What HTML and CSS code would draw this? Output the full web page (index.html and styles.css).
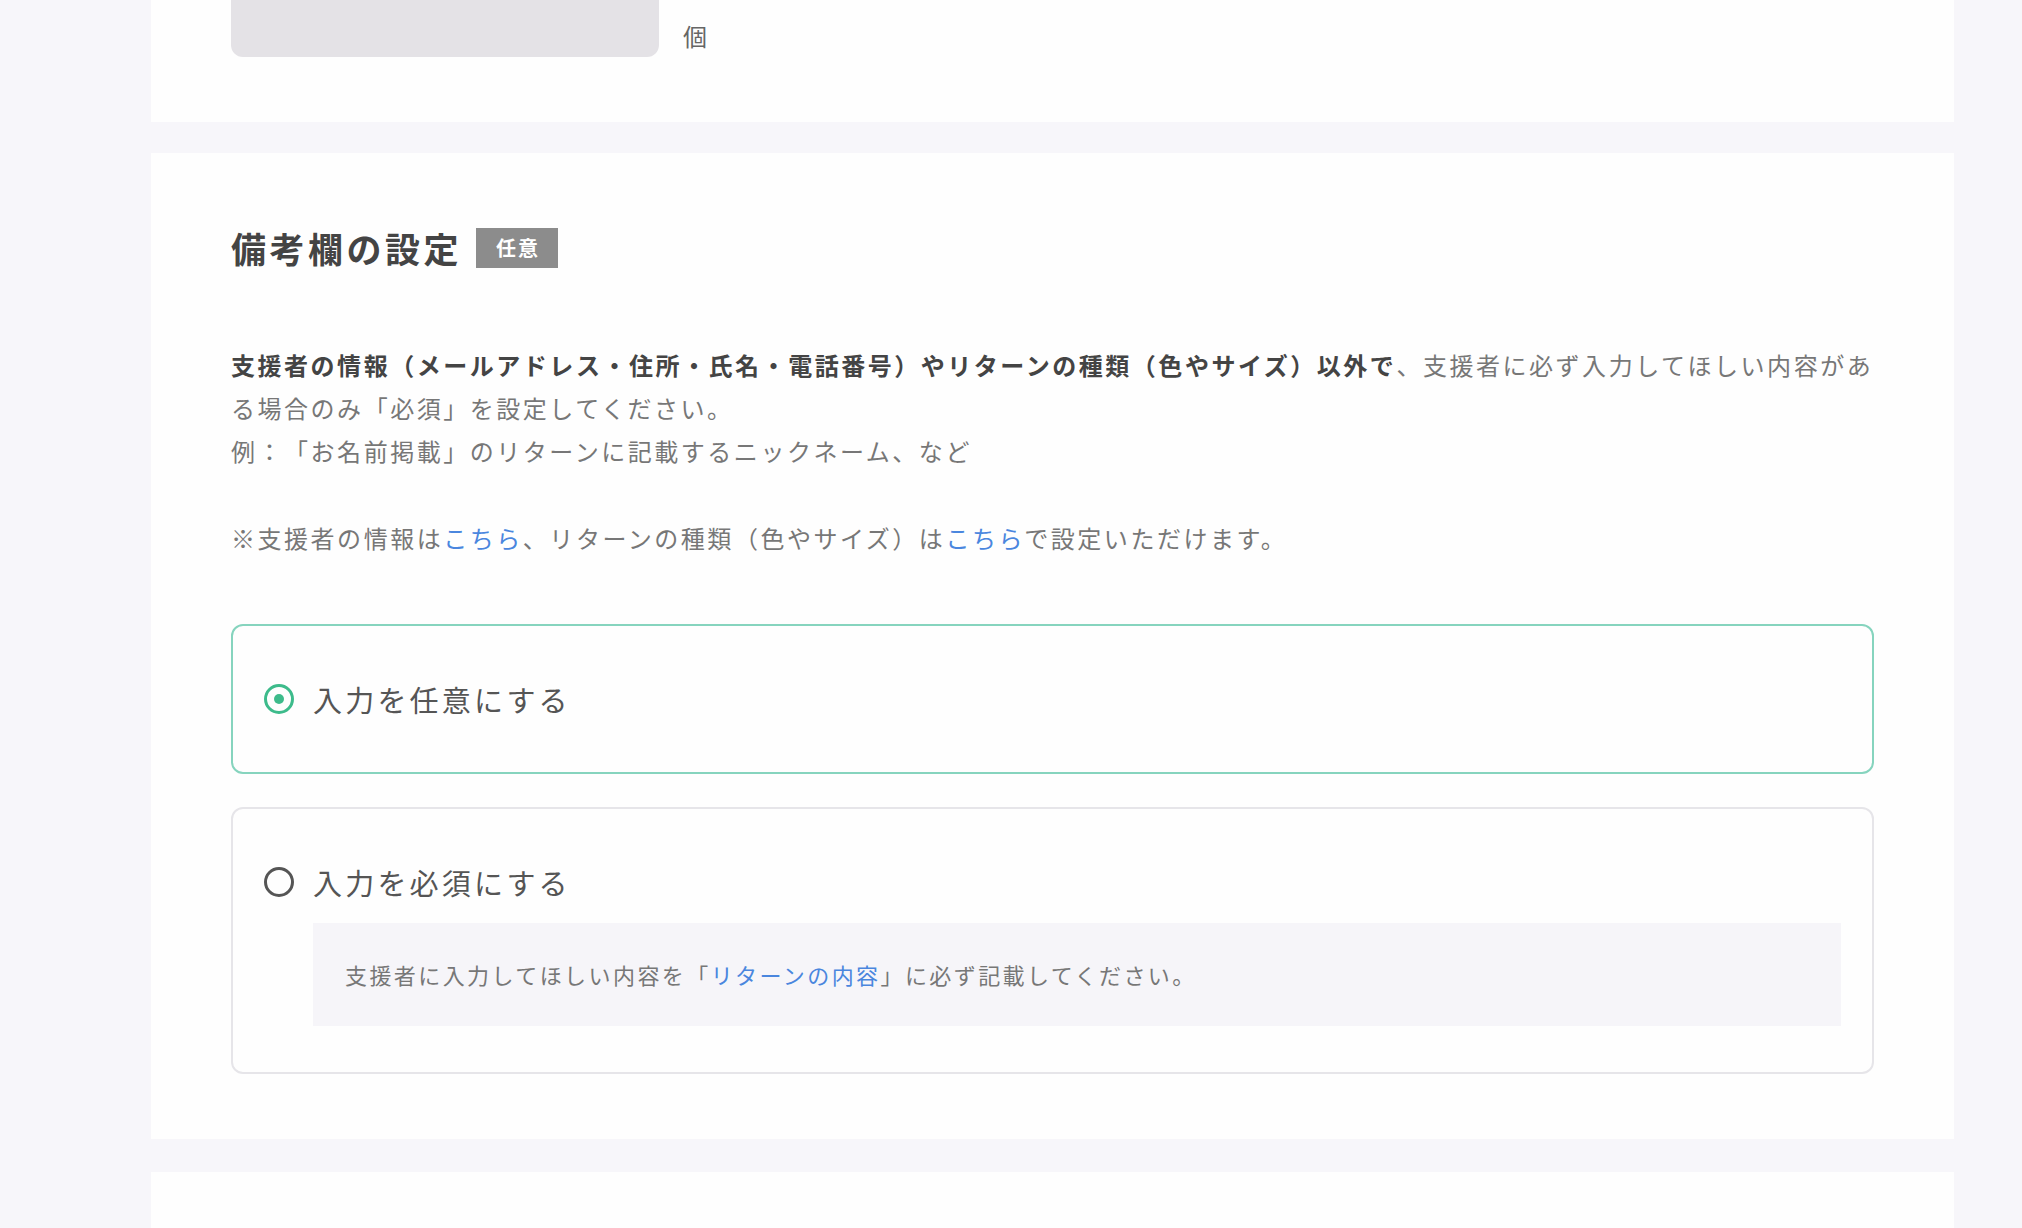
FILE: index.html
```html
<!DOCTYPE html>
<html lang="ja">
<head>
  <meta charset="UTF-8" />
  <meta name="viewport" content="width=device-width, initial-scale=1.0"/>
  <title>備考欄の設定</title>
  <link rel="stylesheet" href="styles.css">
</head>
<body>
  <div class="page">

    <!-- Quantity (cut off at the top) -->
    <section class="panel panel-qty">
      <div class="qty-row">
        <div class="qty-input"></div>
        <span class="unit">個</span>
      </div>
    </section>

    <!-- Remarks setting -->
    <section class="panel panel-remarks">
      <div class="panel-title">
        <h2>備考欄の設定</h2>
        <span class="badge">任意</span>
      </div>

      <div class="desc">
        <p><strong>支援者の情報（メールアドレス・住所・氏名・電話番号）やリターンの種類（色やサイズ）以外で</strong>、支援者に必ず入力してほしい内容がある場合のみ「必須」を設定してください。</p>
        <p>例：「お名前掲載」のリターンに記載するニックネーム、など</p>
        <p class="note-line">※支援者の情報は<a href="#">こちら</a>、リターンの種類（色やサイズ）は<a href="#">こちら</a>で設定いただけます。</p>
      </div>

      <div class="options">
        <label class="option is-selected">
          <span class="option-row">
            <span class="radio"></span>
            <span class="option-label">入力を任意にする</span>
          </span>
        </label>
        <label class="option option-required">
          <span class="option-row">
            <span class="radio"></span>
            <span class="option-label">入力を必須にする</span>
          </span>
          <span class="option-note">支援者に入力してほしい内容を「<a href="#">リターンの内容</a>」に必ず記載してください。</span>
        </label>
      </div>
    </section>

    <section class="panel panel-next"></section>
  </div>
</body>
</html>
```

FILE: styles.css
```css
html, body {
  margin: 0;
  padding: 0;
  height: 100%;
  background-color: #f7f6fa;
  font-family: "Noto Sans CJK JP", "Noto Sans", sans-serif;
  color: #555;
  text-spacing-trim: space-all;
}

.page {
  padding: 0 68px 0 151px;
  height: 100vh;
  overflow: hidden;
}

/* Panels */
.panel {
  background: #fefefe;
  padding: 0 80px 0 80px;
  margin-top: 31px;
  display: flow-root;
}
.panel-qty {
  margin-top: 0;
  padding-bottom: 65px;
}
.panel-remarks {
  padding-top: 71px;
  padding-bottom: 65px;
}
.panel-next {
  margin-top: 33px;
  height: 56px;
}

/* Quantity row */
.qty-row {
  display: flex;
  align-items: flex-end;
  gap: 24px;
  margin-top: -23px;
}
.qty-input {
  width: 428px;
  height: 80px;
  background: #e4e2e6;
  border-radius: 12px;
}
.unit {
  font-size: 24px;
  line-height: 34px;
  color: #666;
  margin-bottom: 4px;
}

/* Heading */
.panel-title {
  display: flex;
  align-items: center;
  gap: 14px;
  height: 48px;
}
.panel-title h2 {
  margin: 0;
  font-size: 35px;
  line-height: 48px;
  letter-spacing: 0.1em;
  color: #444;
  font-weight: bold;
}
.badge {
  display: inline-flex;
  align-items: center;
  height: 40px;
  padding: 0 18px 0 20px;
  background: #8c8c8c;
  color: #fff;
  font-size: 20px;
  line-height: 1;
  font-weight: bold;
  letter-spacing: 0.1em;
}

/* Description */
.desc {
  margin-top: 71px;
  font-size: 24px;
  line-height: 1.8;
  letter-spacing: 2.53px;
  color: #777;
}
.desc p {
  margin: 0;
}
.desc strong {
  color: #444;
}
.desc .note-line {
  margin-top: 43px;
}
a {
  color: #4a86de;
  text-decoration: none;
}

/* Options */
.options {
  margin-top: 65px;
  display: flex;
  flex-direction: column;
  gap: 33px;
}
.option {
  display: block;
  border: 2px solid #e6e5e9;
  border-radius: 12px;
  padding: 53px 31px;
  cursor: pointer;
}
.option.is-selected {
  border-color: #86d4be;
}
.option-required {
  padding-bottom: 46px;
}
.option-row {
  display: flex;
  align-items: center;
  gap: 19px;
  height: 40px;
}
.radio {
  box-sizing: border-box;
  width: 30px;
  height: 30px;
  border: 3px solid #555;
  border-radius: 50%;
  display: flex;
  align-items: center;
  justify-content: center;
  flex-shrink: 0;
}
.is-selected .radio {
  border-color: #3dbb8b;
}
.is-selected .radio::after {
  content: "";
  width: 10px;
  height: 10px;
  border-radius: 50%;
  background: #3dbb8b;
}
.option-label {
  font-size: 29px;
  letter-spacing: 0.11em;
  color: #555;
}
.option-note {
  display: flex;
  align-items: center;
  height: 103px;
  margin: 21px 0 0 49px;
  padding: 0 32px;
  background: #f6f5f9;
  font-size: 22px;
  letter-spacing: 2.42px;
  color: #777;
}
```
